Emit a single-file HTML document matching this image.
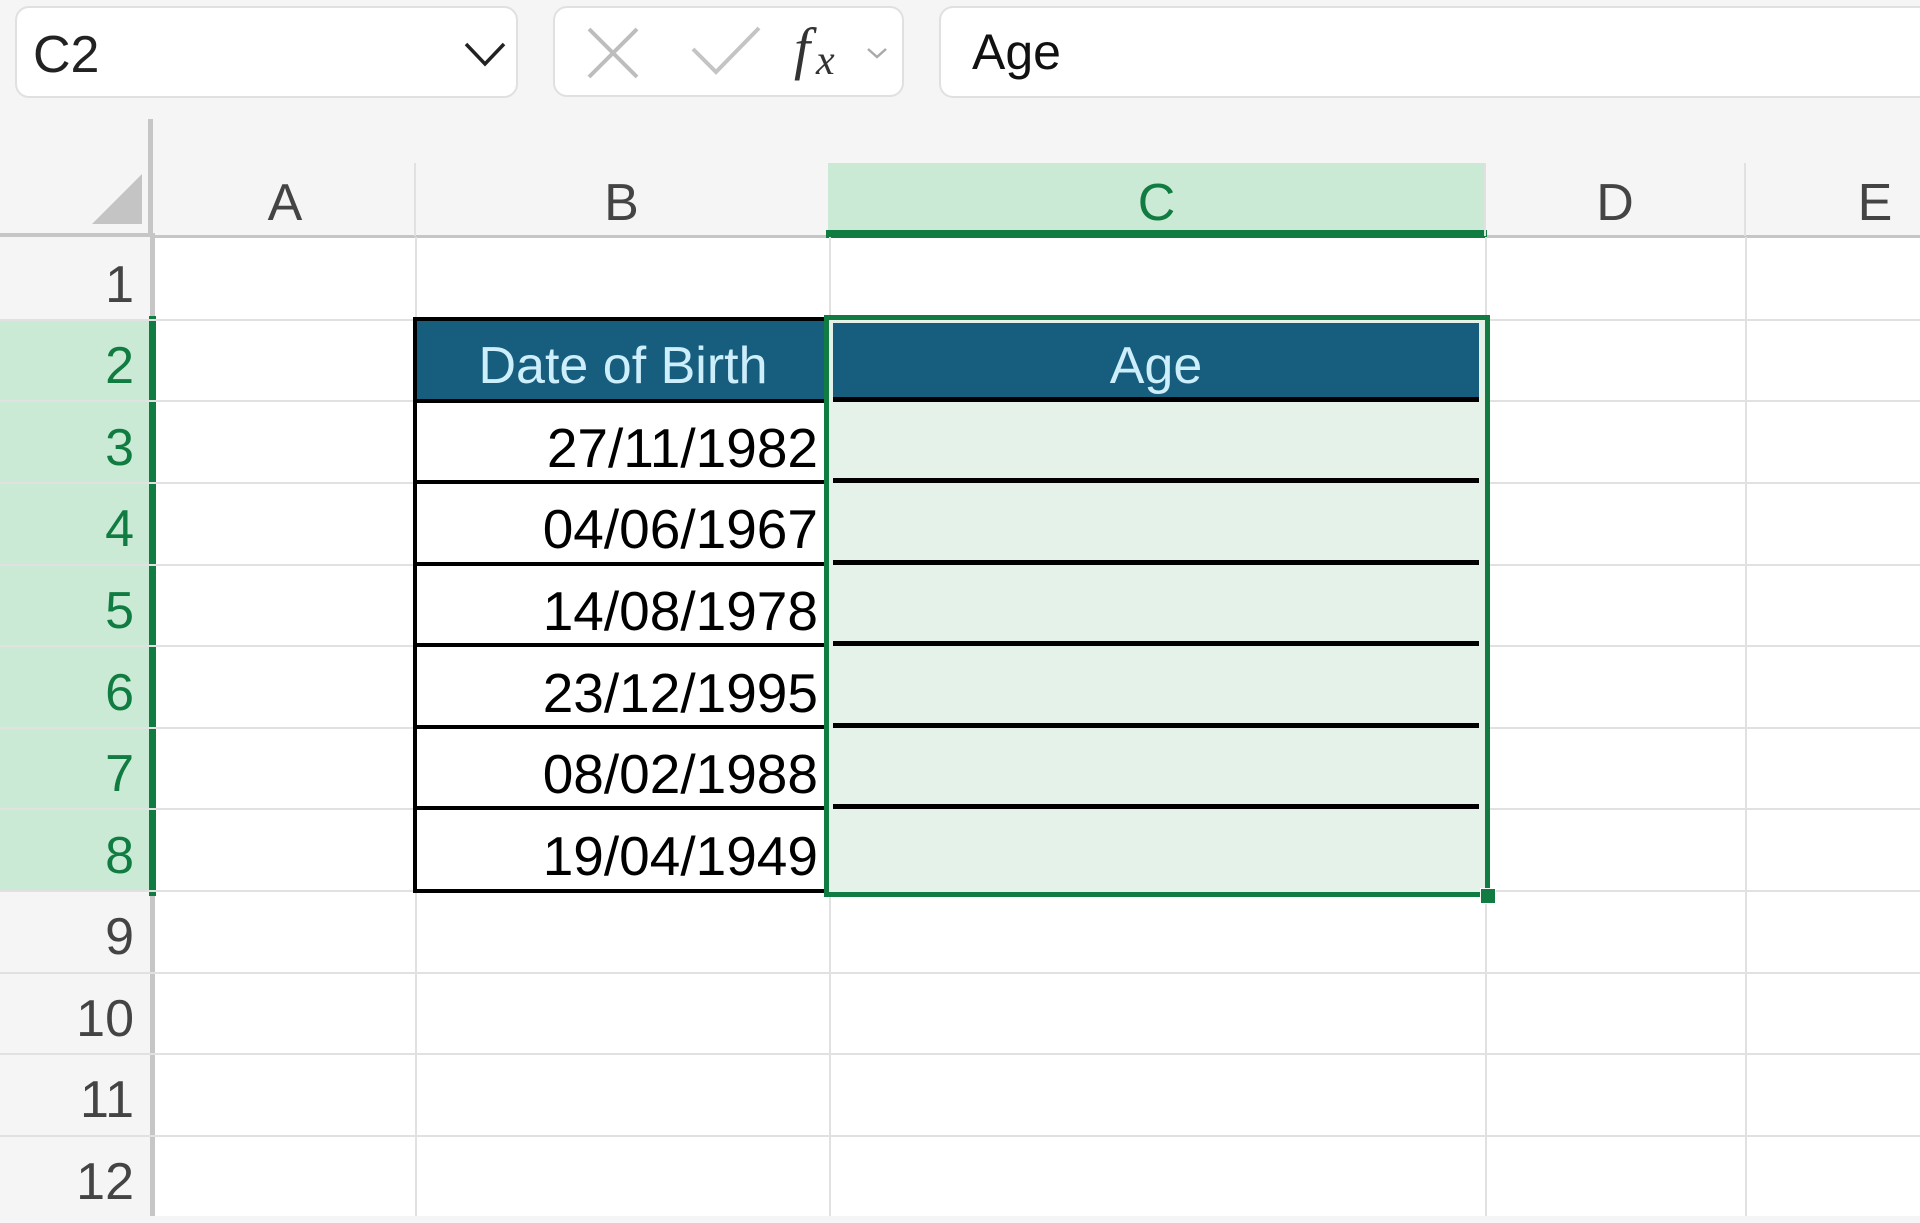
<!DOCTYPE html>
<html><head><meta charset="utf-8">
<style>
*{margin:0;padding:0;box-sizing:border-box}
body{width:1920px;height:1216px;background:#f5f5f5;position:relative;overflow:hidden;font-family:"Liberation Sans",sans-serif}
.a{position:absolute}
.box{position:absolute;background:#fff;border:2px solid #e0e0e0;border-radius:14px}
.hl{position:absolute;height:2px;background:#e1e1e1}
.vl{position:absolute;width:2px;background:#e1e1e1}
.rn{position:absolute;left:0;width:150px;text-align:right;padding-right:16px;font-size:52px;color:#444;line-height:82px;height:82px}
.ch{position:absolute;top:163px;height:73px;text-align:center;font-size:52px;color:#444;line-height:80px}
.d{position:absolute;left:418px;width:400px;text-align:right;font-size:55px;color:#000;line-height:82px;height:82px}
</style></head><body>
<!-- top bar -->
<div class="box" style="left:15px;top:6px;width:503px;height:92px"></div>
<div class="a" style="left:33px;top:25px;font-size:52px;color:#222;line-height:60px">C2</div>
<svg class="a" style="left:462px;top:38px" width="46" height="30"><polyline points="4,6 23,26 42,6" fill="none" stroke="#222" stroke-width="3.5"/></svg>
<div class="box" style="left:553px;top:6px;width:351px;height:91px"></div>
<svg class="a" style="left:585px;top:25px" width="56" height="56"><path d="M4 4 L52 52 M52 4 L4 52" stroke="#bdbdbd" stroke-width="4" fill="none"/></svg>
<svg class="a" style="left:690px;top:25px" width="72" height="52"><polyline points="3,24 26,47 69,3" fill="none" stroke="#c4c4c4" stroke-width="4"/></svg>
<svg class="a" style="left:790px;top:22px" width="60" height="60"><text x="4" y="46" font-family="Liberation Serif,serif" font-style="italic" font-size="58" fill="#333">f</text><text x="26" y="52" font-family="Liberation Serif,serif" font-style="italic" font-size="42" fill="#333">x</text></svg>
<svg class="a" style="left:866px;top:46px" width="22" height="14"><polyline points="2,3 11,11 20,3" fill="none" stroke="#aaa" stroke-width="2.5"/></svg>
<div class="box" style="left:939px;top:6px;width:1000px;height:92px;border-right:none;border-radius:14px 0 0 14px"></div>
<div class="a" style="left:972px;top:22px;font-size:50px;color:#111;line-height:60px">Age</div>

<!-- grid area -->
<div class="a" style="left:155px;top:237px;width:1765px;height:979px;background:#fff"></div>
<div class="a" style="left:828px;top:163px;width:657px;height:73px;background:#caead6"></div>
<div class="a" style="left:826px;top:230px;width:661px;height:8px;background:#107c41"></div>
<div class="a" style="left:0;top:233px;width:155px;height:4px;background:#c6c6c6"></div>
<div class="a" style="left:155px;top:235px;width:671px;height:3px;background:#c6c6c6"></div>
<div class="a" style="left:1487px;top:235px;width:433px;height:3px;background:#c6c6c6"></div>
<div class="a" style="left:148px;top:119px;width:5px;height:118px;background:#c6c6c6"></div>
<svg class="a" style="left:90px;top:172px" width="54" height="54"><polygon points="52,2 52,52 2,52" fill="#c4c4c4"/></svg>
<div class="vl" style="left:414px;top:163px;height:73px"></div>
<div class="vl" style="left:1484px;top:163px;height:73px"></div>
<div class="vl" style="left:1744px;top:163px;height:73px"></div>
<div class="ch" style="left:155px;width:260px">A</div>
<div class="ch" style="left:415px;width:413px">B</div>
<div class="ch" style="left:828px;width:657px;color:#107c41">C</div>
<div class="ch" style="left:1485px;width:260px">D</div>
<div class="ch" style="left:1745px;width:260px">E</div>

<div class="a" style="left:0;top:320px;width:150px;height:571px;background:#caead6"></div>
<div class="a" style="left:150px;top:237px;width:5px;height:979px;background:#c6c6c6"></div>
<div class="a" style="left:149px;top:316px;width:7px;height:580px;background:#107c41"></div>

<div class="hl" style="left:0;top:319px;width:1920px"></div>
<div class="hl" style="left:0;top:400px;width:1920px"></div>
<div class="hl" style="left:0;top:482px;width:1920px"></div>
<div class="hl" style="left:0;top:564px;width:1920px"></div>
<div class="hl" style="left:0;top:645px;width:1920px"></div>
<div class="hl" style="left:0;top:727px;width:1920px"></div>
<div class="hl" style="left:0;top:808px;width:1920px"></div>
<div class="hl" style="left:0;top:890px;width:1920px"></div>
<div class="hl" style="left:0;top:972px;width:1920px"></div>
<div class="hl" style="left:0;top:1053px;width:1920px"></div>
<div class="hl" style="left:0;top:1135px;width:1920px"></div>
<div class="vl" style="left:415px;top:237px;height:979px"></div>
<div class="vl" style="left:829px;top:237px;height:979px"></div>
<div class="vl" style="left:1485px;top:237px;height:979px"></div>
<div class="vl" style="left:1745px;top:237px;height:979px"></div>

<div class="rn" style="top:244px">1</div>
<div class="rn" style="top:325px;color:#107c41">2</div>
<div class="rn" style="top:407px;color:#107c41">3</div>
<div class="rn" style="top:488px;color:#107c41">4</div>
<div class="rn" style="top:570px;color:#107c41">5</div>
<div class="rn" style="top:652px;color:#107c41">6</div>
<div class="rn" style="top:733px;color:#107c41">7</div>
<div class="rn" style="top:815px;color:#107c41">8</div>
<div class="rn" style="top:896px">9</div>
<div class="rn" style="top:978px">10</div>
<div class="rn" style="top:1059px">11</div>
<div class="rn" style="top:1141px">12</div>

<div class="a" style="left:413px;top:317px;width:415px;height:576px;background:#fff;border:4px solid #000;border-right:none"></div>
<div class="a" style="left:417px;top:321px;width:411px;height:78px;background:#175e7e"></div>
<div class="a" style="left:417px;top:399px;width:411px;height:4px;background:#000"></div>
<div class="a" style="left:417px;top:480px;width:411px;height:4px;background:#000"></div>
<div class="a" style="left:417px;top:562px;width:411px;height:4px;background:#000"></div>
<div class="a" style="left:417px;top:643px;width:411px;height:4px;background:#000"></div>
<div class="a" style="left:417px;top:725px;width:411px;height:4px;background:#000"></div>
<div class="a" style="left:417px;top:806px;width:411px;height:4px;background:#000"></div>
<div class="a" style="left:418px;top:327px;width:410px;text-align:center;font-size:52px;color:#cdeefb;line-height:78px">Date of Birth</div>
<div class="d" style="top:407px">27/11/1982</div>
<div class="d" style="top:488px">04/06/1967</div>
<div class="d" style="top:570px">14/08/1978</div>
<div class="d" style="top:652px">23/12/1995</div>
<div class="d" style="top:733px">08/02/1988</div>
<div class="d" style="top:815px">19/04/1949</div>

<div class="a" style="left:824px;top:315px;width:666px;height:582px;background:#e4f2e9;border:5px solid #107c41"></div>
<div class="a" style="left:833px;top:323px;width:646px;height:76px;background:#175e7e"></div>
<div class="a" style="left:833px;top:397px;width:646px;height:5px;background:#000"></div>
<div class="a" style="left:833px;top:478px;width:646px;height:5px;background:#000"></div>
<div class="a" style="left:833px;top:560px;width:646px;height:5px;background:#000"></div>
<div class="a" style="left:833px;top:641px;width:646px;height:5px;background:#000"></div>
<div class="a" style="left:833px;top:723px;width:646px;height:5px;background:#000"></div>
<div class="a" style="left:833px;top:804px;width:646px;height:5px;background:#000"></div>
<div class="a" style="left:833px;top:328px;width:646px;text-align:center;font-size:52px;color:#cdeefb;line-height:76px">Age</div>
<div class="a" style="left:1480px;top:888px;width:16px;height:16px;background:#107c41;border:1px solid #fff"></div>
</body></html>
